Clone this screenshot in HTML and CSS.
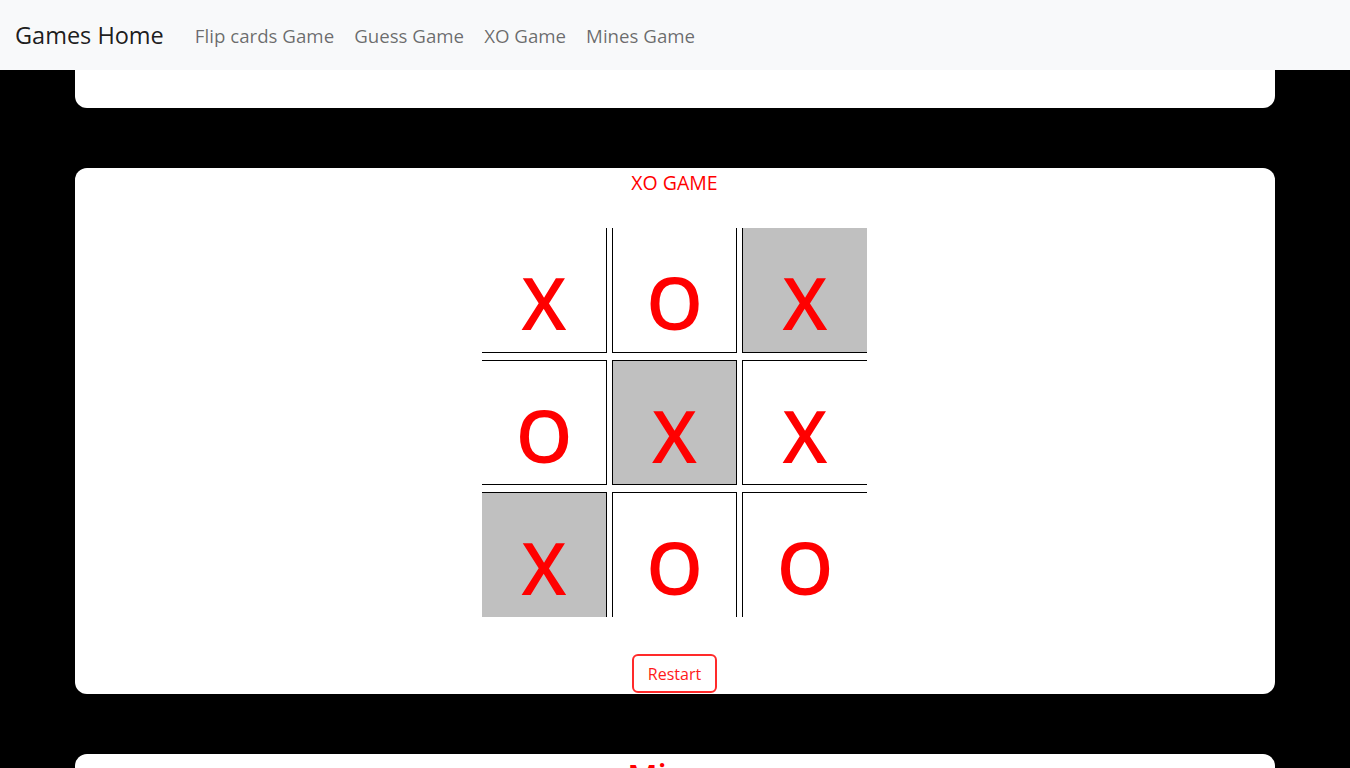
FILE: index.html
```html
<!DOCTYPE html>
<html lang="en">
<head>
<meta charset="utf-8">
<title>Games Home</title>
<link rel="stylesheet" href="styles.css">
</head>
<body>
<nav class="navbar">
  <a class="brand" href="#">Games Home</a>
  <ul class="nav-links">
    <li><a href="#">Flip cards Game</a></li>
    <li><a href="#">Guess Game</a></li>
    <li><a href="#">XO Game</a></li>
    <li><a href="#">Mines Game</a></li>
  </ul>
</nav>
<main class="container">
  <section class="card card-tail"></section>

  <section class="card xo-card">
    <h2 class="xo-title">XO GAME</h2>
    <div class="board">
      <div class="cell">X</div>
      <div class="cell">O</div>
      <div class="cell win">X</div>
      <div class="cell">O</div>
      <div class="cell win">X</div>
      <div class="cell">X</div>
      <div class="cell win">X</div>
      <div class="cell">O</div>
      <div class="cell">O</div>
    </div>
    <button class="restart" type="button">Restart</button>
  </section>

  <section class="card mines-card">
    <h2 class="mines-title">Mines</h2>
  </section>
</main>
</body>
</html>
```
FILE: styles.css
```css
* { box-sizing: border-box; }

html, body {
  margin: 0;
  padding: 0;
}

body {
  background: #000;
  font-family: "Open Sans", "Noto Sans", Arial, sans-serif;
  overflow: hidden;
}

.navbar {
  height: 70px;
  background: #f8f9fa;
  display: flex;
  align-items: center;
  padding-left: 15px;
}

.brand {
  font-size: 23.5px;
  color: rgba(0, 0, 0, 0.9);
  text-decoration: none;
  margin-right: 31px;
}

.nav-links {
  list-style: none;
  margin: 0;
  padding: 0;
  display: flex;
  gap: 20px;
}

.nav-links a {
  font-size: 18.7px;
  color: rgba(0, 0, 0, 0.58);
  text-decoration: none;
}

.container {
  width: 1200px;
  margin: 0 auto;
  display: flex;
  flex-direction: column;
  gap: 60px;
}

.card {
  background: #fff;
  border-radius: 12px;
}

.card-tail {
  height: 38px;
  border-top-left-radius: 0;
  border-top-right-radius: 0;
}

.xo-card {
  height: 526px;
  display: flex;
  flex-direction: column;
  align-items: center;
}

.xo-title {
  margin: 0 0 0 -1px;
  font-size: 19.5px;
  font-weight: 400;
  line-height: 30px;
  color: #ff0000;
}

.board {
  margin-top: 30px;
  margin-right: 1px;
  display: grid;
  grid-template-columns: repeat(3, 125px);
  grid-auto-rows: 125px;
  column-gap: 5px;
  row-gap: 7px;
}

.cell {
  border: 1px solid #000;
  background: #fff;
  color: #ff0000;
  font-size: 72px;
  font-weight: 600;
  line-height: 1;
  text-align: center;
  padding-top: 38px;
}

.cell.win { background: #c0c0c0; }

.cell:nth-child(3n+1) { border-left: none; }
.cell:nth-child(3n) { border-right: none; }
.cell:nth-child(-n+3) { border-top: none; }
.cell:nth-child(n+7) { border-bottom: none; }

.restart {
  margin-top: 37px;
  margin-right: 1px;
  width: 85px;
  height: 39px;
  padding: 0;
  border: 2px solid #ff2a2a;
  border-radius: 6px;
  background: #fff;
  color: #ff1a1a;
  font-family: inherit;
  font-size: 16px;
}

.mines-card {
  height: 200px;
  display: flex;
  justify-content: center;
}

.mines-title {
  margin: 0;
  padding-top: 2px;
  font-size: 33px;
  line-height: 1.2;
  font-weight: 600;
  color: #ff0000;
}
```
